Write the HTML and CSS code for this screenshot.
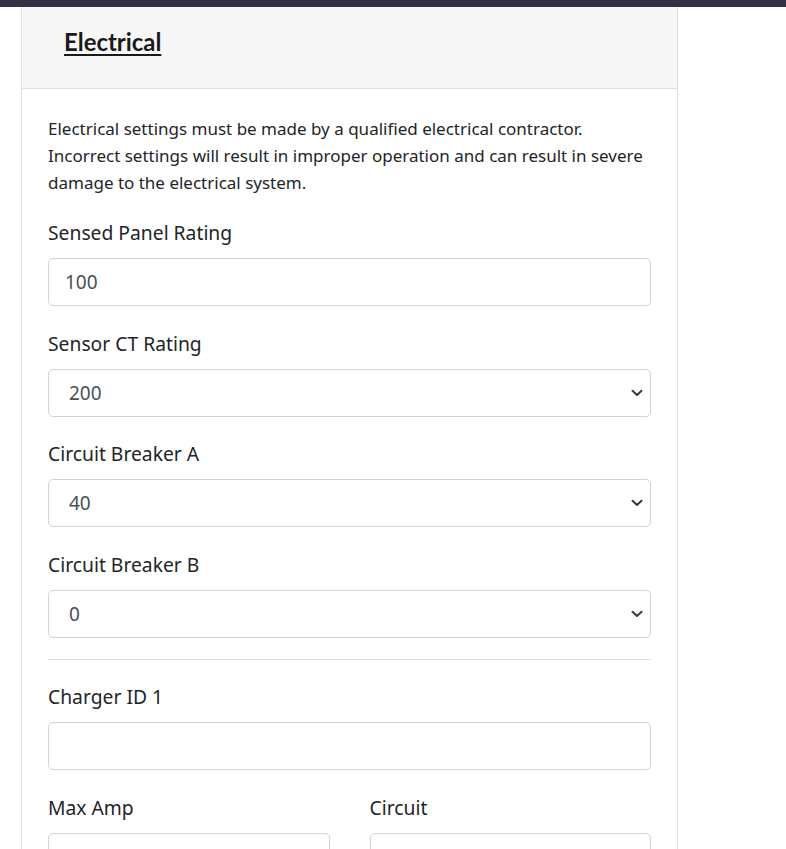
FILE: index.html
```html
<!DOCTYPE html>
<html>
<head>
<meta charset="utf-8">
<link rel="stylesheet" href="styles.css">
</head>
<body>
<div class="topbar"></div>
<div class="page">
  <div class="card">
    <div class="card-header"><h2 class="title">Electrical</h2></div>
    <div class="card-body">
      <p class="note">Electrical settings must be made by a qualified electrical contractor.<br>Incorrect settings will result in improper operation and can result in severe damage to the electrical system.</p>
      <div class="field">
        <label class="label">Sensed Panel Rating</label>
        <div class="control">100</div>
      </div>
      <div class="field">
        <label class="label">Sensor CT Rating</label>
        <div class="control select"><span>200</span><svg class="chev" width="12" height="8" viewBox="0 0 12 8"><path d="M1.5 1.8 L6 6 L10.5 1.8" fill="none" stroke="#343a40" stroke-width="2" stroke-linecap="round" stroke-linejoin="round"/></svg></div>
      </div>
      <div class="field">
        <label class="label">Circuit Breaker A</label>
        <div class="control select"><span>40</span><svg class="chev" width="12" height="8" viewBox="0 0 12 8"><path d="M1.5 1.8 L6 6 L10.5 1.8" fill="none" stroke="#343a40" stroke-width="2" stroke-linecap="round" stroke-linejoin="round"/></svg></div>
      </div>
      <div class="field">
        <label class="label">Circuit Breaker B</label>
        <div class="control select"><span>0</span><svg class="chev" width="12" height="8" viewBox="0 0 12 8"><path d="M1.5 1.8 L6 6 L10.5 1.8" fill="none" stroke="#343a40" stroke-width="2" stroke-linecap="round" stroke-linejoin="round"/></svg></div>
      </div>
      <hr class="divider">
      <div class="field">
        <label class="label">Charger ID 1</label>
        <div class="control"></div>
      </div>
      <div class="row">
        <div class="field">
          <label class="label">Max Amp</label>
          <div class="control"></div>
        </div>
        <div class="field">
          <label class="label">Circuit</label>
          <div class="control"></div>
        </div>
      </div>
    </div>
  </div>
</div>
</body>
</html>
```
FILE: styles.css
```css
html, body { margin: 0; padding: 0; background: #fff; }
body { font-family: "Noto Sans", "Open Sans", sans-serif; color: #212529; overflow: hidden; height: 849px; }
.topbar { height: 7px; background: #313344; }
.page { padding-left: 21px; width: 657px; }
.card { border: 1px solid #dfdfdf; border-top: none; background: #fff; height: 870px; box-sizing: border-box; overflow: hidden; }
.card-header { background: #f7f7f7; border-bottom: 1px solid #dfdfdf; height: 82px; padding-left: 42px; box-sizing: border-box; }
.title { margin: 0; padding-top: 21px; font-family: "Lato", sans-serif; font-weight: 700; font-size: 23.9px; line-height: 28px; text-decoration: underline; text-underline-offset: 3px; text-decoration-thickness: 2px; color: #1a1a1a; }
.card-body { padding: 26px 26px 0 26px; }
.note { margin: 0 0 22px 0; font-size: 17px; line-height: 27px; }
.field { display: flex; flex-direction: column; }
.label { font-size: 19.3px; line-height: 30px; margin-bottom: 10px; }
.control { height: 48px; box-sizing: border-box; border: 1px solid #ced4da; border-radius: 5px; padding: 0 16px; font-size: 19px; line-height: 46px; color: #495057; margin-bottom: 22.5px; display: flex; align-items: center; }
.control.select { padding-left: 20px; justify-content: space-between; }
.chev { margin-right: -9px; }
.divider { border: none; border-top: 1px solid #dfdfdf; margin: -1.5px 0 22px 0; }
.row { display: grid; grid-template-columns: 1fr 1fr; column-gap: 40px; margin-top: 1px; }
```
